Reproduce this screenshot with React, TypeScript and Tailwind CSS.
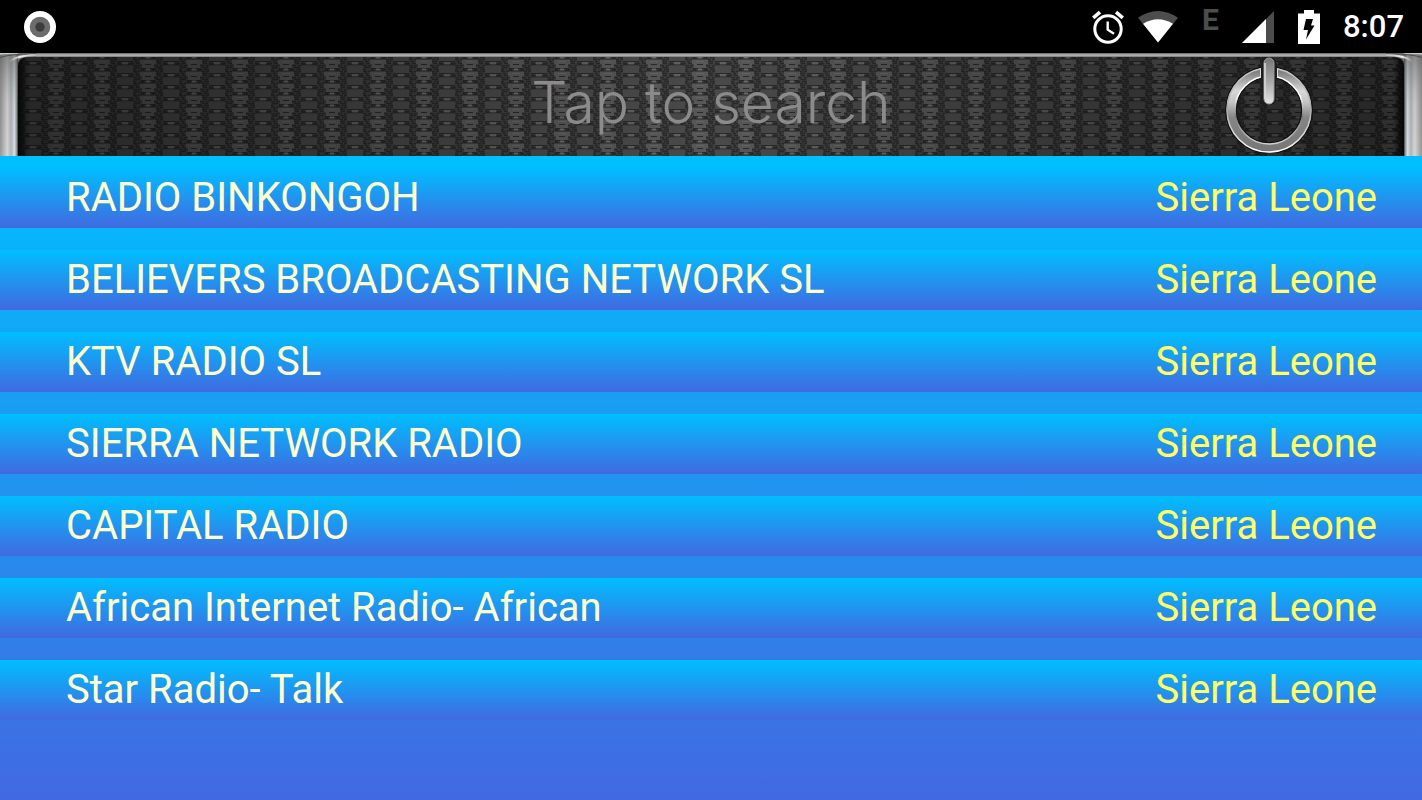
interface Station {
  name: string;
  country: string;
}

const STATIONS: Station[] = [
  { name: "RADIO BINKONGOH", country: "Sierra Leone" },
  { name: "BELIEVERS BROADCASTING NETWORK SL", country: "Sierra Leone" },
  { name: "KTV RADIO SL", country: "Sierra Leone" },
  { name: "SIERRA NETWORK RADIO", country: "Sierra Leone" },
  { name: "CAPITAL RADIO", country: "Sierra Leone" },
  { name: "African Internet Radio- African", country: "Sierra Leone" },
  { name: "Star Radio- Talk", country: "Sierra Leone" },
];

function StatusBar() {
  return (
    <header className="flex h-[53px] items-center bg-black pr-[18px] pl-6 text-white">
      <svg className="size-8" viewBox="0 0 32 32" aria-hidden="true">
        <circle cx="16" cy="16" r="16" fill="#fff" />
        <circle cx="16" cy="16" r="10.3" fill="#6c6c6c" />
        <circle cx="16" cy="16" r="4.7" fill="#3c3c3c" />
      </svg>
      <div className="ml-auto flex items-center">
        <svg className="h-[34px] w-8" viewBox="0 0 32 34" fill="none" stroke="#fff" aria-hidden="true">
          <circle cx="16" cy="19" r="13.2" strokeWidth="3" />
          <path d="M1.2 7.8 8 2.2M30.8 7.8 24 2.2" strokeWidth="3.6" />
          <path d="M15.7 11.5v8.2l6.3 4" strokeWidth="2.4" />
        </svg>
        <svg className="ml-[14px] h-8 w-10" viewBox="0 0 40 32" aria-hidden="true">
          <path d="M0 6.7Q20-6.700 40 6.7L20 31.5Z" fill="#4d4d4d" />
          <path d="M5 12.8Q20 3.5 35 12.8L20 31.5Z" fill="#fff" />
        </svg>
        <span className="ml-6 h-9 w-[18px] font-['Roboto',sans-serif] text-[30px] leading-[22px] font-bold text-[#4d4d4d]">
          E
        </span>
        <svg className="ml-[22px] size-8" viewBox="0 0 32 32" aria-hidden="true">
          <path d="M32 0V32H0Z" fill="#4d4d4d" />
          <path d="M24 8V32H0Z" fill="#fff" />
        </svg>
        <svg className="ml-6 h-[34px] w-[22px]" viewBox="0 0 22 34" aria-hidden="true">
          <path d="M6 0h10v3.500h6V34H0V3.500h6Z" fill="#fff" />
          <path d="M8 9h7l-2 6.500H16.500L8 29.500 10 20H5.500Z" fill="#000" />
        </svg>
        <span className="ml-[23px] font-['Roboto',sans-serif] text-[31px] leading-9 font-medium">8:07</span>
      </div>
    </header>
  );
}

// Woven speaker grille, lighter towards the middle of the bar
function Mesh() {
  return (
    <svg className="absolute inset-0 size-full" aria-hidden="true">
      <defs>
        <pattern id="mesh" width="46" height="12" patternUnits="userSpaceOnUse">
          <rect width="46" height="12" fill="#404040" />
          <path
            d="M0 .5h3M16 .5h4M22 .5h3M41 .5h4M0 2.500h2M18 2.500h6M42 2.500h4M3 4.500h3M14 4.500h4M20 4.500h5M41 4.500h3M0 6.500h2M18 6.500h3M22 6.500h3M41 6.500h4M18 8.500h5M25 8.500h3M38 8.500h3M43 8.500h3M0 10.500h2M19 10.500h4M25 10.500h4M37 10.500h5M44 10.500h2"
            stroke="#2a2a2a"
            strokeWidth="1.3"
          />
          <path d="M25 1h16v7H25z" fill="#4a4a4a" />
          <path d="M2 7h16v4H2zM4 11h12v1H4zM4 0h12v3H4z" fill="#585858" />
          <path d="M3 3.500h5M12 3.500h5M2 5.500h5M13 5.500h5M7 11.500h6M28 8.500h10M25 11.500h5M36 11.500h5" stroke="#2a2a2a" />
          <path d="M8 4.500h4M30 10h6" stroke="#6c6c6c" strokeWidth="1.5" />
          <path d="M6 8.500h8" stroke="#636363" />
        </pattern>
        <linearGradient id="meshShade">
          <stop offset="0" stopColor="#000" stopOpacity="0.5" />
          <stop offset="0.3" stopColor="#000" stopOpacity="0.22" />
          <stop offset="0.5" stopColor="#000" stopOpacity="0" />
          <stop offset="0.7" stopColor="#000" stopOpacity="0.22" />
          <stop offset="1" stopColor="#000" stopOpacity="0.5" />
        </linearGradient>
      </defs>
      <rect width="100%" height="100%" fill="url(#mesh)" />
      <rect width="100%" height="100%" fill="url(#meshShade)" />
    </svg>
  );
}

// Chrome post at the left end; the right end flips it
function FrameEdge({ id, className }: { id: string; className?: string }) {
  return (
    <svg className={`relative h-full w-9 shrink-0 ${className ?? ""}`} viewBox="0 0 36 103" aria-hidden="true">
      <defs>
        <linearGradient id={`${id}-post`} gradientUnits="userSpaceOnUse" x1="0" x2="18">
          <stop offset="0" stopColor="#8c8c8c" />
          <stop offset="0.15" stopColor="#a4a4a4" />
          <stop offset="0.4" stopColor="#d2d2d2" />
          <stop offset="0.62" stopColor="#a9adaf" />
          <stop offset="0.8" stopColor="#d3dde2" />
          <stop offset="0.92" stopColor="#8a9297" />
          <stop offset="1" stopColor="#2a2a2a" />
        </linearGradient>
        <linearGradient id={`${id}-fade`} x1="0" y1="0" x2="0" y2="1">
          <stop offset="0" stopColor="#555" stopOpacity="0.6" />
          <stop offset="0.5" stopColor="#888" stopOpacity="0.1" />
          <stop offset="1" stopColor="#fff" stopOpacity="0.1" />
        </linearGradient>
        <linearGradient id={`${id}-shadow`}>
          <stop offset="0" stopColor="#000" stopOpacity="0.8" />
          <stop offset="1" stopColor="#000" stopOpacity="0" />
        </linearGradient>
        <linearGradient id={`${id}-glint`}>
          <stop offset="0" stopColor="#eee" stopOpacity="0" />
          <stop offset="0.4" stopColor="#eee" />
          <stop offset="1" stopColor="#b8b8b8" />
        </linearGradient>
      </defs>
      <rect x="17" y="3" width="12" height="100" fill={`url(#${id}-shadow)`} />
      <path d="M0 0H36V4H28Q18 4 18 14V103H0Z" fill={`url(#${id}-post)`} />
      <path d="M0 0H36V4H28Q18 4 18 14V103H0Z" fill={`url(#${id}-fade)`} />
      <path d="M18 0H36V4H28Q20 4 18 9Z" fill="#777" />
      <path d="M0 4.500Q10 1 36 .5" fill="none" stroke="#505050" />
      <path d="M9 9Q16 2.500 36 2" fill="none" stroke={`url(#${id}-glint)`} strokeWidth="1.8" />
      <path d="M0 1Q6 0 18 0" fill="none" stroke="#ccc" strokeWidth="1.5" />
    </svg>
  );
}

function PowerIcon() {
  return (
    <svg className="h-24 w-[88px]" viewBox="0 0 88 96" fill="none" aria-hidden="true">
      <defs>
        <linearGradient id="ring" x1="0" y1="0" x2="0" y2="1">
          <stop offset="0" stopColor="#808080" />
          <stop offset="0.25" stopColor="#d8d8d8" />
          <stop offset="0.4" stopColor="#c4c4c4" />
          <stop offset="0.6" stopColor="#858585" />
          <stop offset="1" stopColor="#787878" />
        </linearGradient>
        <linearGradient id="ringInner" x1="0" y1="0" x2="0" y2="1">
          <stop offset="0" stopColor="#fff" />
          <stop offset="0.3" stopColor="#fff" />
          <stop offset="0.6" stopColor="#777" />
          <stop offset="1" stopColor="#d0d0d0" />
        </linearGradient>
        <linearGradient id="ringOuter" x1="0" y1="0" x2="0" y2="1">
          <stop offset="0" stopColor="#c8c8c8" />
          <stop offset="0.5" stopColor="#aaa" />
          <stop offset="1" stopColor="#fff" />
        </linearGradient>
        <linearGradient id="bar" x1="0" y1="0" x2="0" y2="1">
          <stop offset="0" stopColor="#777" />
          <stop offset="0.5" stopColor="#a8a8a8" />
          <stop offset="1" stopColor="#e4e4e4" />
        </linearGradient>
      </defs>
      <circle cx="44" cy="53" r="38" stroke="#111" strokeWidth="12" />
      <circle cx="44" cy="53" r="38" stroke="url(#ring)" strokeWidth="9" />
      <circle cx="44" cy="53" r="42" stroke="url(#ringOuter)" strokeWidth="1.5" />
      <circle cx="44" cy="53" r="34" stroke="url(#ringInner)" strokeWidth="1.5" />
      <path d="M36 6H52V24H36Z" fill="#1d1d1d" />
      <path d="M35.5 11.5V19.500M52.500 11.5V19.500" stroke="#ddd" />
      <rect x="37" y="0" width="14" height="48" rx="6" fill="#1d1d1d" />
      <rect x="39" y="1" width="10" height="46" rx="5" fill="url(#bar)" stroke="#9a9a9a" />
      <path d="M40 6V42" stroke="#ddd" strokeWidth="1.5" />
    </svg>
  );
}

function SearchBar() {
  return (
    <div className="relative flex h-[103px] bg-black">
      <Mesh />
      <FrameEdge id="edge-left" />
      <div className="relative flex min-w-0 flex-1 flex-col">
        <div className="h-1 bg-linear-to-b from-[#5c5c5c] via-[#c0c0c0] to-[#777777]" />
        <input
          type="text"
          aria-label="Tap to search"
          placeholder="Tap to search"
          className="min-h-0 w-full flex-1 bg-transparent pb-2 text-center font-['Inter',sans-serif] text-[57px] font-light text-[#8c8a8a] outline-none placeholder:text-[#8c8a8a]"
        />
      </div>
      <FrameEdge id="edge-right" className="-scale-x-100" />
      <button type="button" aria-label="Power" className="absolute top-1 right-[109px]">
        <PowerIcon />
      </button>
    </div>
  );
}

function StationRow({ station }: { station: Station }) {
  return (
    <li>
      <button
        type="button"
        className="flex h-[60px] w-full items-center justify-between bg-linear-to-b/srgb from-[#00bfff] to-[#4169e1] pr-[45px] pl-[66px] text-left font-['Roboto',sans-serif] text-[40px] leading-[60px]"
      >
        <span className="text-[#ffffcc]">{station.name}</span>
        <span className="text-[#ffff66]">{station.country}</span>
      </button>
    </li>
  );
}

export default function App() {
  return (
    <div className="flex min-h-screen flex-col bg-black">
      <StatusBar />
      <SearchBar />
      <main className="flex-1 bg-linear-to-b/srgb from-[#00bfff] to-[#4169e1] pt-3">
        <ul className="flex flex-col gap-[22px]">
          {STATIONS.map((station) => (
            <StationRow key={station.name} station={station} />
          ))}
        </ul>
      </main>
    </div>
  );
}
